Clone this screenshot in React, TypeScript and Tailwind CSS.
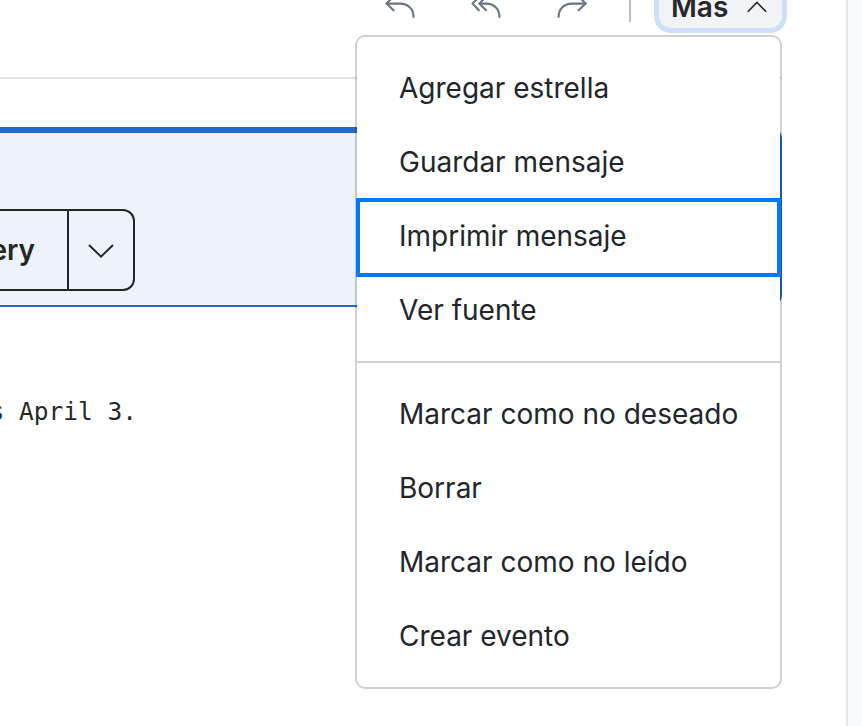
import type { ReactNode } from "react"

interface MenuItem {
  label: string
  focused?: boolean
}

const menuGroups: MenuItem[][] = [
  [
    { label: "Agregar estrella" },
    { label: "Guardar mensaje" },
    { label: "Imprimir mensaje", focused: true },
    { label: "Ver fuente" },
  ],
  [
    { label: "Marcar como no deseado" },
    { label: "Borrar" },
    { label: "Marcar como no leído" },
    { label: "Crear evento" },
  ],
]

const toolbarActions = [
  { label: "Responder", paths: ["M10.5 4.5 L2.6 12.6 L9.5 19.3", "M2.6 12.6 H16 C24 12.6 29.5 18 29.5 26"] },
  {
    label: "Responder a todos",
    paths: [
      "M10.5 4.5 L2.6 12.6 L8.8 19.3",
      "M17 4.5 L9.4 12.6 L16 19.3",
      "M9.4 12.6 H16 C24 12.6 29.5 18 29.5 26",
    ],
  },
  { label: "Reenviar", paths: ["M22 4.5 L29.6 12.6 L22.7 19.3", "M29.6 12.6 H16.3 C8 12.6 2.6 18 2.6 26"] },
]

const ActionIcon = ({ paths }: { paths: string[] }) => (
  <svg
    className="size-8 text-[#6b7483]"
    viewBox="0 0 32 32"
    fill="none"
    stroke="currentColor"
    strokeWidth="2.1"
    strokeLinecap="round"
    strokeLinejoin="round"
  >
    {paths.map((d) => (
      <path key={d} d={d} />
    ))}
  </svg>
)

const Toolbar = () => (
  <header className="flex h-[79px] w-[782px] justify-end border-b-2 border-[#e0e4e8]">
    <div className="-mt-3.5 flex h-[42px] items-center">
      <div className="flex gap-[54px]">
        {toolbarActions.map((action) => (
          <button key={action.label} aria-label={action.label}>
            <ActionIcon paths={action.paths} />
          </button>
        ))}
      </div>
      <div className="ml-[41px] h-[30px] w-0.5 bg-[#bcc0c4]" />
      <button className="ml-7 flex h-[42px] w-[123px] items-center justify-between rounded-xl bg-[#f1f3f5] pr-[15px] pl-3 text-[28px] font-semibold text-[#262729] ring-[5px] ring-[#cfdff7]">
        Más
        <svg className="h-3 w-5" viewBox="0 0 20 12" fill="none" stroke="currentColor" strokeWidth="1.6">
          <path d="M0.8 10.8 L10 1.5 L19.2 10.8" />
        </svg>
      </button>
    </div>
  </header>
)

const Banner = ({ children }: { children: ReactNode }) => (
  <section className="mt-12 h-[180px] w-[782px] rounded-r-xl border-t-6 border-r-2 border-b-2 border-[#2469cd] bg-[#edf2fb] pt-[76px]">
    {children}
  </section>
)

const SplitButton = () => (
  <div className="flex h-[82px] w-[135px] rounded-r-xl border-2 border-l-0 border-[#262626] text-[#262626]">
    <button className="flex w-[69px] items-center justify-end overflow-hidden border-r-2 border-[#262626] pr-8 text-[28px] font-semibold">
      Delivery
    </button>
    <button className="flex flex-1 items-center justify-center" aria-label="Más opciones">
      <svg className="h-4 w-7" viewBox="0 0 28 16" fill="none" stroke="currentColor" strokeWidth="2">
        <path d="M2 3 L14 14.6 L26 3" />
      </svg>
    </button>
  </div>
)

const MoreMenu = () => (
  <div
    role="menu"
    className="absolute top-[35px] left-[355px] w-[427px] rounded-[10px] border-2 border-black/18 bg-white bg-clip-padding text-[28px] whitespace-nowrap text-[#22262a]"
  >
    {menuGroups.map((group, idx) => (
      <div key={idx} className="border-t-2 border-[#d2d2d2] py-3.5 first:border-t-0">
        {group.map((item) => (
          <div
            key={item.label}
            role="menuitem"
            className={
              item.focused
                ? "-mx-px -mt-px -mb-1 flex h-[79px] items-center border-4 border-[#0079ff] pr-9 pb-1 pl-[39px]"
                : "flex h-[74px] items-center px-[42px]"
            }
          >
            {item.label}
          </div>
        ))}
      </div>
    ))}
  </div>
)

export default function App() {
  return (
    <div className="relative flex h-[726px] w-[862px] overflow-hidden bg-[#f8fafd] font-['Inter',sans-serif]">
      <main className="w-[848px] border-r-2 border-[#e4e7ed] bg-white">
        <Toolbar />
        <Banner>
          <SplitButton />
        </Banner>
        <p className="mt-[90px] flex w-[137px] justify-end font-['DejaVu_Sans_Mono',monospace] text-[24.5px] leading-[30px] whitespace-pre text-[#26282b]">
          is April 3.
        </p>
      </main>
      <MoreMenu />
    </div>
  )
}
